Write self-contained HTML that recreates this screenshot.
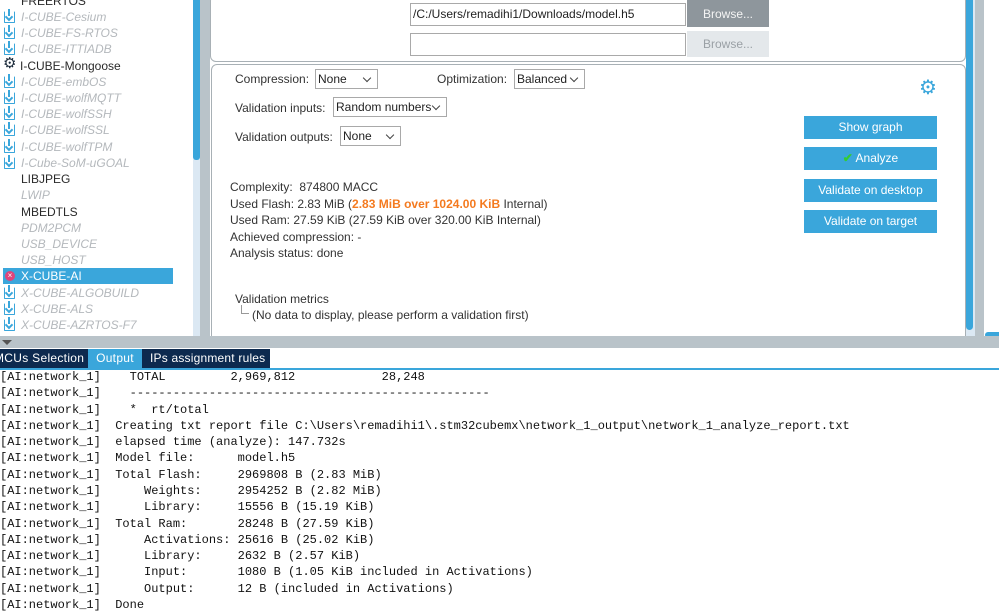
<!DOCTYPE html>
<html><head><meta charset="utf-8"><style>
*{margin:0;padding:0;box-sizing:border-box}
body{width:999px;height:609px;overflow:hidden;background:#fff;position:relative;font-family:"Liberation Sans",sans-serif;font-size:12px;color:#333}
.a{position:absolute}
.tree div{position:absolute;left:21px;font-size:12px;font-style:italic;color:#b4b8bc;white-space:nowrap}
.tree div.n{font-style:normal;color:#2a2a2a}
.ic{position:absolute;left:4px;width:11px;height:12px;border:1.5px solid #3aa6db;border-top-color:transparent;border-radius:1px}
.ic:before{content:"";position:absolute;left:3px;top:-3px;width:2px;height:7px;background:#3aa6db}
.ic:after{content:"";position:absolute;left:1px;top:2px;width:4px;height:4px;border-right:2px solid #3aa6db;border-bottom:2px solid #3aa6db;transform:rotate(45deg)}
.btn{position:absolute;left:804px;width:133px;height:23px;background:#3aa6db;color:#fff;text-align:center;line-height:23px;font-size:12px}
.sel{position:absolute;background:#fff;border:1px solid #a9a9a9;height:20px;line-height:18px;padding-left:2px;font-size:12px;color:#222}
.sel:after{content:"";position:absolute;right:7px;top:5px;width:5px;height:5px;border-right:1px solid #444;border-bottom:1px solid #444;transform:rotate(45deg)}
.out{position:absolute;left:0;top:369px;font-family:"Liberation Mono",monospace;font-size:12px;line-height:16.28px;color:#111;white-space:pre}
.tab{position:absolute;top:349px;height:19px;line-height:19px;color:#fff;font-size:12px;letter-spacing:0.3px;white-space:nowrap;overflow:hidden}
</style></head><body>
<div class="a" style="left:193px;top:0;width:7px;height:336px;background:#dbe8f3"></div>
<div class="a" style="left:193px;top:0;width:7px;height:160px;background:#3aa6db;border-radius:0 0 3px 3px"></div>
<div class="a" style="left:200px;top:0;width:10px;height:348px;background:#b9c3c9"></div>
<div class="a" style="left:0;top:336px;width:210px;height:12px;background:#b9c3c9"></div>
<div class="a" style="left:2px;top:340px;width:0;height:0;border-left:5px solid transparent;border-right:5px solid transparent;border-top:5px solid #555"></div>
<div class="a" style="left:3px;top:268px;width:170px;height:16px;background:#3aa6db"></div>
<div class="tree">
<div class="n" style="top:-6px">FREERTOS</div>
<span class="ic" style="top:11px"></span><div style="top:10px">I-CUBE-Cesium</div>
<span class="ic" style="top:27px"></span><div style="top:26px">I-CUBE-FS-RTOS</div>
<span class="ic" style="top:43px"></span><div style="top:42px">I-CUBE-ITTIADB</div>
<span class="a" style="left:3px;top:56px;font-size:15px;color:#1a2a3a;line-height:16px">⚙</span><div class="n" style="top:59px;left:20px">I-CUBE-Mongoose</div>
<span class="ic" style="top:76px"></span><div style="top:75px">I-CUBE-embOS</div>
<span class="ic" style="top:92px"></span><div style="top:91px">I-CUBE-wolfMQTT</div>
<span class="ic" style="top:108px"></span><div style="top:107px">I-CUBE-wolfSSH</div>
<span class="ic" style="top:124px"></span><div style="top:123px">I-CUBE-wolfSSL</div>
<span class="ic" style="top:141px"></span><div style="top:140px">I-CUBE-wolfTPM</div>
<span class="ic" style="top:157px"></span><div style="top:156px">I-Cube-SoM-uGOAL</div>
<div class="n" style="top:172px">LIBJPEG</div>
<div style="top:188px">LWIP</div>
<div class="n" style="top:205px">MBEDTLS</div>
<div style="top:221px">PDM2PCM</div>
<div style="top:237px">USB_DEVICE</div>
<div style="top:253px">USB_HOST</div>
<span class="a" style="left:5px;top:271px;width:10px;height:10px;border-radius:50%;background:#e0457b;color:#fff;font-size:8px;line-height:10px;text-align:center">×</span>
<div class="n" style="top:269px;color:#fff">X-CUBE-AI</div>
<span class="ic" style="top:287px"></span><div style="top:286px">X-CUBE-ALGOBUILD</div>
<span class="ic" style="top:303px"></span><div style="top:302px">X-CUBE-ALS</div>
<span class="ic" style="top:319px"></span><div style="top:318px">X-CUBE-AZRTOS-F7</div>
</div>
<div class="a" style="left:210px;top:-5px;width:756px;height:67px;border:1px solid #a8b0b5;border-radius:6px"></div>
<div class="a" style="left:211px;top:64px;width:755px;height:280px;border:1px solid #a8b0b5;border-radius:6px"></div>
<div class="a" style="left:410px;top:3px;width:276px;height:23px;border:1px solid #a9a9a9;padding-left:2px;line-height:21px;color:#222">/C:/Users/remadihi1/Downloads/model.h5</div>
<div class="a" style="left:687px;top:0;width:82px;height:27px;background:#8e969c;color:#f4f4f4;text-align:center;line-height:28px">Browse...</div>
<div class="a" style="left:410px;top:33px;width:276px;height:23px;border:1px solid #a9a9a9"></div>
<div class="a" style="left:687px;top:31px;width:82px;height:26px;background:#e4e8eb;color:#9aa0a5;text-align:center;line-height:26px">Browse...</div>
<div class="a" style="left:235px;top:72px">Compression:</div>
<div class="sel" style="left:315px;top:69px;width:63px">None</div>
<div class="a" style="left:437px;top:72px">Optimization:</div>
<div class="sel" style="left:514px;top:69px;width:71px">Balanced</div>
<div class="a" style="left:235px;top:101px">Validation inputs:</div>
<div class="sel" style="left:333px;top:97px;width:114px">Random numbers</div>
<div class="a" style="left:235px;top:130px">Validation outputs:</div>
<div class="sel" style="left:340px;top:126px;width:61px">None</div>
<div class="a" style="left:919px;top:78px;color:#3aa6db;font-size:20px;line-height:20px">⚙</div>
<div class="btn" style="top:116px">Show graph</div>
<div class="btn" style="top:147px"><span style="color:#3c3;font-weight:bold">✔</span> Analyze</div>
<div class="btn" style="top:179px">Validate on desktop</div>
<div class="btn" style="top:210px">Validate on target</div>
<div class="a" style="left:230px;top:179px;line-height:16.6px">Complexity:&nbsp; 874800 MACC<br>Used Flash: 2.83 MiB (<span style="color:#f47a1f;font-weight:bold">2.83 MiB over 1024.00 KiB</span> Internal)<br>Used Ram: 27.59 KiB (27.59 KiB over 320.00 KiB Internal)<br>Achieved compression: -<br>Analysis status: done</div>
<div class="a" style="left:235px;top:292px">Validation metrics</div>
<div class="a" style="left:241px;top:305px;width:8px;height:9px;border-left:1px solid #999;border-bottom:1px solid #999"></div>
<div class="a" style="left:252px;top:308px">(No data to display, please perform a validation first)</div>
<div class="a" style="left:966px;top:0;width:9px;height:340px;background:#dbe8f3"></div>
<div class="a" style="left:966px;top:0;width:7px;height:330px;background:#3aa6db;border-radius:0 0 4px 4px"></div>
<div class="a" style="left:975px;top:0;width:9px;height:340px;background:#b9c3c9"></div>
<div class="a" style="left:985px;top:332px;width:14px;height:6px;background:#3aa6db;border-radius:3px 0 0 3px"></div>
<div class="a" style="left:210px;top:336px;width:789px;height:12px;background:#b9c3c9"></div>
<div class="a" style="left:0;top:348px;width:999px;height:22px;background:#fff"></div>
<div class="a" style="left:0;top:349px;width:270px;height:19px;background:#0d2a4f"></div>
<div class="a" style="left:0;top:368px;width:999px;height:2px;background:#3aa6db"></div>
<div class="tab" style="left:-6px;width:92px">MCUs Selection</div>
<div class="tab" style="left:88px;width:54px;background:#3aa6db;text-align:center">Output</div>
<div class="tab" style="left:143px;background:#0d2a4f;width:127px;padding-left:7px;letter-spacing:0.2px">IPs assignment rules</div>
<div class="out">[AI:network_1]    TOTAL         2,969,812            28,248
[AI:network_1]    --------------------------------------------------
[AI:network_1]    *  rt/total
[AI:network_1]  Creating txt report file C:\Users\remadihi1\.stm32cubemx\network_1_output\network_1_analyze_report.txt
[AI:network_1]  elapsed time (analyze): 147.732s
[AI:network_1]  Model file:      model.h5
[AI:network_1]  Total Flash:     2969808 B (2.83 MiB)
[AI:network_1]      Weights:     2954252 B (2.82 MiB)
[AI:network_1]      Library:     15556 B (15.19 KiB)
[AI:network_1]  Total Ram:       28248 B (27.59 KiB)
[AI:network_1]      Activations: 25616 B (25.02 KiB)
[AI:network_1]      Library:     2632 B (2.57 KiB)
[AI:network_1]      Input:       1080 B (1.05 KiB included in Activations)
[AI:network_1]      Output:      12 B (included in Activations)
[AI:network_1]  Done</div>
</body></html>
